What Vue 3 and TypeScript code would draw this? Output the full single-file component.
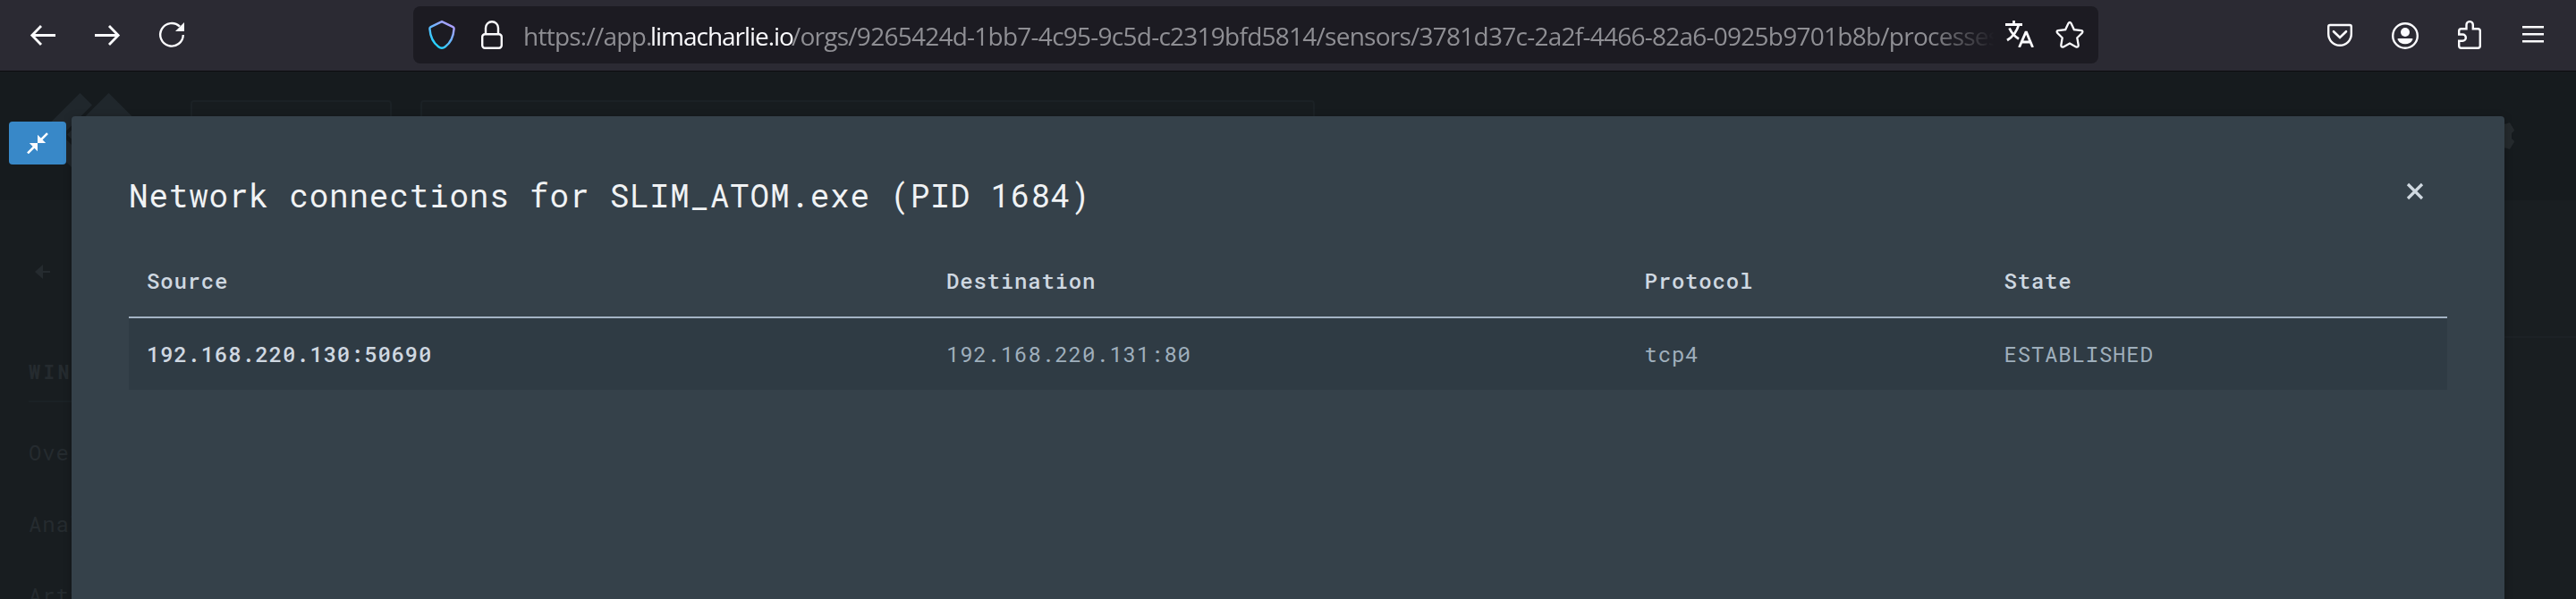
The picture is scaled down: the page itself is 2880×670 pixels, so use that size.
<script setup lang="ts">
interface Connection {
  source: string
  destination: string
  protocol: string
  state: string
}

const processName = 'SLIM_ATOM.exe'
const pid = 1684
const columns: string[] = ['Source', 'Destination', 'Protocol', 'State']
const connections: Connection[] = [
  { source: '192.168.220.130:50690', destination: '192.168.220.131:80', protocol: 'tcp4', state: 'ESTABLISHED' },
]
const menu: string[] = ['Overview', 'Analytics', 'Artifacts']
</script>

<template>
  <div class="window">
    <header class="toolbar">
      <nav class="nav">
        <svg class="icon" viewBox="0 0 32 32"><path d="M30 16.500H4.500M14 6 3.800 16.500 14 27" stroke-width="2.800" /></svg>
        <svg class="icon" viewBox="0 0 32 32"><path d="M2 16.500h25.500M18 6l10.200 10.500L18 27" stroke-width="2.800" /></svg>
        <svg class="icon" viewBox="0 0 32 32">
          <path d="M25 6.700A12.800 12.800 0 1 0 28.800 16" stroke-width="2.400" />
          <path class="solid" d="M30 2V12H20z" />
        </svg>
      </nav>
      <div class="address">
        <svg class="shield" viewBox="0 0 32 34">
          <defs>
            <linearGradient id="shield-tint" x1="0.2" y1="0.9" x2="0.8" y2="0.1">
              <stop offset="0" stop-color="#1fd4ff" />
              <stop offset="0.55" stop-color="#6db4ff" />
              <stop offset="1" stop-color="#a9a0ff" />
            </linearGradient>
          </defs>
          <path d="M16 2.200 28.400 8.200Q29.700 8.800 29.600 10.200 28.600 24 19.800 30.200 16 33.200 12.200 30.200 3.400 24 2.400 10.200 2.300 8.800 3.600 8.200z" stroke="url(#shield-tint)" stroke-width="2.400" />
        </svg>
        <svg class="lock" viewBox="0 0 24 32">
          <rect x="1.200" y="15.200" width="21.600" height="15.600" rx="3" stroke-width="2.400" />
          <path d="M5 15V8.200a7 7 0 0 1 14 0V15" stroke-width="2.400" />
        </svg>
        <div class="url"><span class="scheme">https://app.</span><span class="domain">limacharlie.io</span><span class="path">/orgs/9265424d-1bb7-4c95-9c5d-c2319bfd5814/sensors/3781d37c-2a2f-4466-82a6-0925b9701b8b/processes</span></div>
        <svg class="translate" viewBox="0 0 32 30">
          <path d="M0 4.500H19M9.500 0v4.500M15 4.500C13 12 8.500 18 2 22M4.500 8.500C7 14 10 17.500 15 20.500" stroke-width="2.800" />
          <path d="M15.500 30 22.800 13.200h.8L30.600 30M18 24h10.500" stroke-width="2.800" />
        </svg>
        <svg class="star" viewBox="0 0 32 32">
          <path d="M14.500 3.100Q16 .5 17.500 3.100L20.800 10.100 29 11.200Q31.300 11.600 29.900 13.700L24.300 19.300 25.700 27.500Q25.700 30.300 23 29.400L16 25.600 9 29.400Q6.300 30.300 6.300 27.500L7.700 19.300 2.100 13.700Q.7 11.600 3 11.200L11.200 10.100z" stroke-width="2.300" />
        </svg>
      </div>
      <div class="tools">
        <svg class="icon" viewBox="0 0 32 32">
          <path d="M5 5h22q1.800 0 1.800 1.800V15a12.800 12.800 0 0 1-25.600 0V6.800Q3.200 5 5 5z" stroke-width="2.400" />
          <path d="M9 12.200 16 19l7-6.800" stroke-width="2.600" stroke-linecap="round" />
        </svg>
        <svg class="icon" viewBox="0 0 32 32">
          <circle cx="16" cy="17" r="13.800" stroke-width="2.400" />
          <circle class="solid" cx="16" cy="13" r="5" />
          <path class="solid" d="M8.500 20h15q1.800 0 .8 1.600Q22 26.300 16 26.300T7.700 21.600q-1-1.600.8-1.600z" />
        </svg>
        <svg class="icon" viewBox="0 0 32 32">
          <path d="M3.200 15.500V11.700q0-2.500 2.500-2.500H11.500V4.800a3.650 3.650 0 0 1 7.300 0V9.200h5.500q2.500 0 2.500 2.500v16.600q0 2.500-2.500 2.500H5.700q-2.500 0-2.500-2.500V22.800H7.200a3.650 3.650 0 0 0 0-7.300z" stroke-width="2.400" />
        </svg>
        <svg class="icon" viewBox="0 0 32 32"><path d="M1 7.300h24M1 15.300h24M1 23.300h24" stroke-width="2.500" /></svg>
      </div>
    </header>

    <div class="app">
      <div class="masthead">
        <svg class="logo" viewBox="0 0 124 120">
          <path d="M43.500 0 57 13.500 13.500 57 0 43.500z" />
          <path d="M75.500 0 122 46.500 75.500 93 29 46.500z" />
          <path d="M22 46 69 93 57 106 4 53z" />
        </svg>
        <div class="field org"></div>
        <div class="field search"></div>
        <svg class="gear" viewBox="0 0 32 32"><path d="M12 2.500h10l3-1.200q1-.3 1.600.7l4.200 7q.5 1-.3 1.700L28 13v6l2.500 2.300q.8.700.3 1.700l-4.200 7q-.6 1-1.600.7l-3-1.200H12z" /></svg>
      </div>
      <aside class="sidebar">
        <svg class="back" viewBox="0 0 18 16"><path d="M0 8 9 0v7h8v2H9v7z" /></svg>
        <h2>WINDOWS</h2>
        <ul><li v-for="item in menu" :key="item">{{ item }}</li></ul>
      </aside>
      <main class="content"><div class="divider"></div></main>
    </div>

    <button class="collapse" aria-label="Collapse">
      <svg viewBox="0 0 24 24">
        <path d="M23 1.200 15 9.200M1 23.300 9.500 14.800" stroke="#fff" stroke-width="2.600" />
        <path class="solid" d="M12 2.800 21.200 12H12zM12 12v9.200L2.800 12z" />
      </svg>
    </button>

    <section class="modal">
      <div class="modal-head">
        <h1>Network connections for {{ processName }} (PID {{ pid }})</h1>
        <svg class="close" viewBox="0 0 20 20"><path d="M2 2l16 16M18 2 2 18" /></svg>
      </div>
      <div class="table">
        <div class="row head"><span v-for="c in columns" :key="c">{{ c }}</span></div>
        <div v-for="c in connections" :key="c.source" class="row">
          <strong>{{ c.source }}</strong><span>{{ c.destination }}</span><span>{{ c.protocol }}</span><span>{{ c.state }}</span>
        </div>
      </div>
    </section>
  </div>
</template>

<style>
body { margin: 0; background: #161b1e; }
</style>

<style scoped>
* { box-sizing: border-box; }
.window { position: relative; width: 2880px; height: 670px; overflow: hidden; display: flex; flex-direction: column; font-family: 'Roboto Mono', 'Liberation Mono', monospace; }
svg { display: block; flex: none; fill: none; }
.solid { fill: #fbfbfe; stroke: none; }

.toolbar { height: 80px; flex: none; display: flex; background: #2b2a33; border-bottom: 1px solid #0c0c0f; stroke: #fbfbfe; }
.icon { width: 32px; height: 32px; }
.nav { width: 462px; padding: 23px 0 0 32px; display: flex; gap: 40px; }
.address { width: 1884px; height: 64px; margin-top: 7px; border-radius: 8px; background: #1c1b22; display: flex; align-items: flex-start; padding-left: 16px; }
.shield { width: 32px; height: 34px; margin-top: 15px; }
.lock { width: 24px; height: 32px; margin: 16px 0 0 28px; }
.url { width: 1647px; height: 64px; margin-left: 23px; overflow: hidden; white-space: nowrap; color: #8f8f94; font: 28px/66px 'Open Sans', 'Noto Sans', sans-serif; letter-spacing: -0.75px; -webkit-mask-image: linear-gradient(90deg, #000 1570px, transparent 1645px); mask-image: linear-gradient(90deg, #000 1570px, transparent 1645px); }
.url span { display: inline-block; }
.scheme { width: 142px; }
.domain { width: 158px; color: #fbfbfe; letter-spacing: -1.03px; }
.translate { width: 32px; height: 30px; margin: 16px 0 0 10px; }
.star { width: 32px; height: 32px; margin: 16px 0 0 24px; }
.tools { display: flex; gap: 41px; padding: 23px 0 0 254px; }

.app { flex: 1; display: grid; grid-template: 144px 1fr / 80px 1fr; }
.masthead { grid-column: 1 / 3; display: flex; background: #161b1e; }
.logo { width: 124px; height: 120px; margin: 24px 0 0 46px; fill: #20272c; }
.field { height: 60px; margin-top: 32px; border: 2px solid #1b2125; border-radius: 4px; background: #171c1f; }
.org { width: 225px; margin-left: 43px; }
.search { width: 1000px; margin-left: 32px; }
.gear { width: 32px; height: 32px; margin: 56px 0 0 1310px; fill: #252a2d; }
.sidebar { background: #181d20; color: #252b2f; padding: 72px 0 0 32px; overflow: hidden; white-space: nowrap; }
.back { width: 18px; height: 16px; margin-left: 7px; fill: #252b2f; }
h2 { margin: 84px 0 0; height: 54px; border-bottom: 2px solid #1b2125; font-size: 22px; line-height: 40px; letter-spacing: 3px; font-weight: 700; }
ul { margin: 16px 0 0; padding: 0; list-style: none; }
li { height: 80px; font-size: 24px; line-height: 80px; letter-spacing: 0.8px; }
.content { background: #191e21; }
.divider { height: 154px; border-bottom: 2px solid #1c2125; }

.collapse { position: absolute; left: 10px; top: 136px; width: 64px; height: 48px; padding: 0; border: 0; border-radius: 4px; background: #3888c8; display: grid; place-items: center; }
.collapse svg { width: 24px; height: 24px; }

.modal { position: absolute; left: 80px; top: 130px; width: 2720px; height: 560px; padding: 64px; border-radius: 4px; background: #35414a; box-shadow: 0 2px 10px rgba(0, 0, 0, 0.25); }
.modal-head { height: 94px; display: flex; justify-content: space-between; }
h1 { margin: 0; color: #f0f2f4; font-size: 36px; line-height: 48px; font-weight: 400; letter-spacing: 0.8px; white-space: nowrap; }
.close { width: 20px; height: 20px; margin: 10px 26px 0 0; stroke: #d0d9e1; stroke-width: 3.200; }
.row { display: grid; grid-template-columns: 894px 780.500px 402px 1fr; padding-left: 20px; height: 80px; line-height: 80px; font-size: 24px; letter-spacing: 0.8px; color: #9fafbc; background: #2f3b44; }
.head { height: 68px; line-height: 52px; border-bottom: 2px solid #a3b3c4; background: none; color: #cfd8e1; font-weight: 500; }
strong { font-weight: 500; color: #cfd8e1; }
</style>
